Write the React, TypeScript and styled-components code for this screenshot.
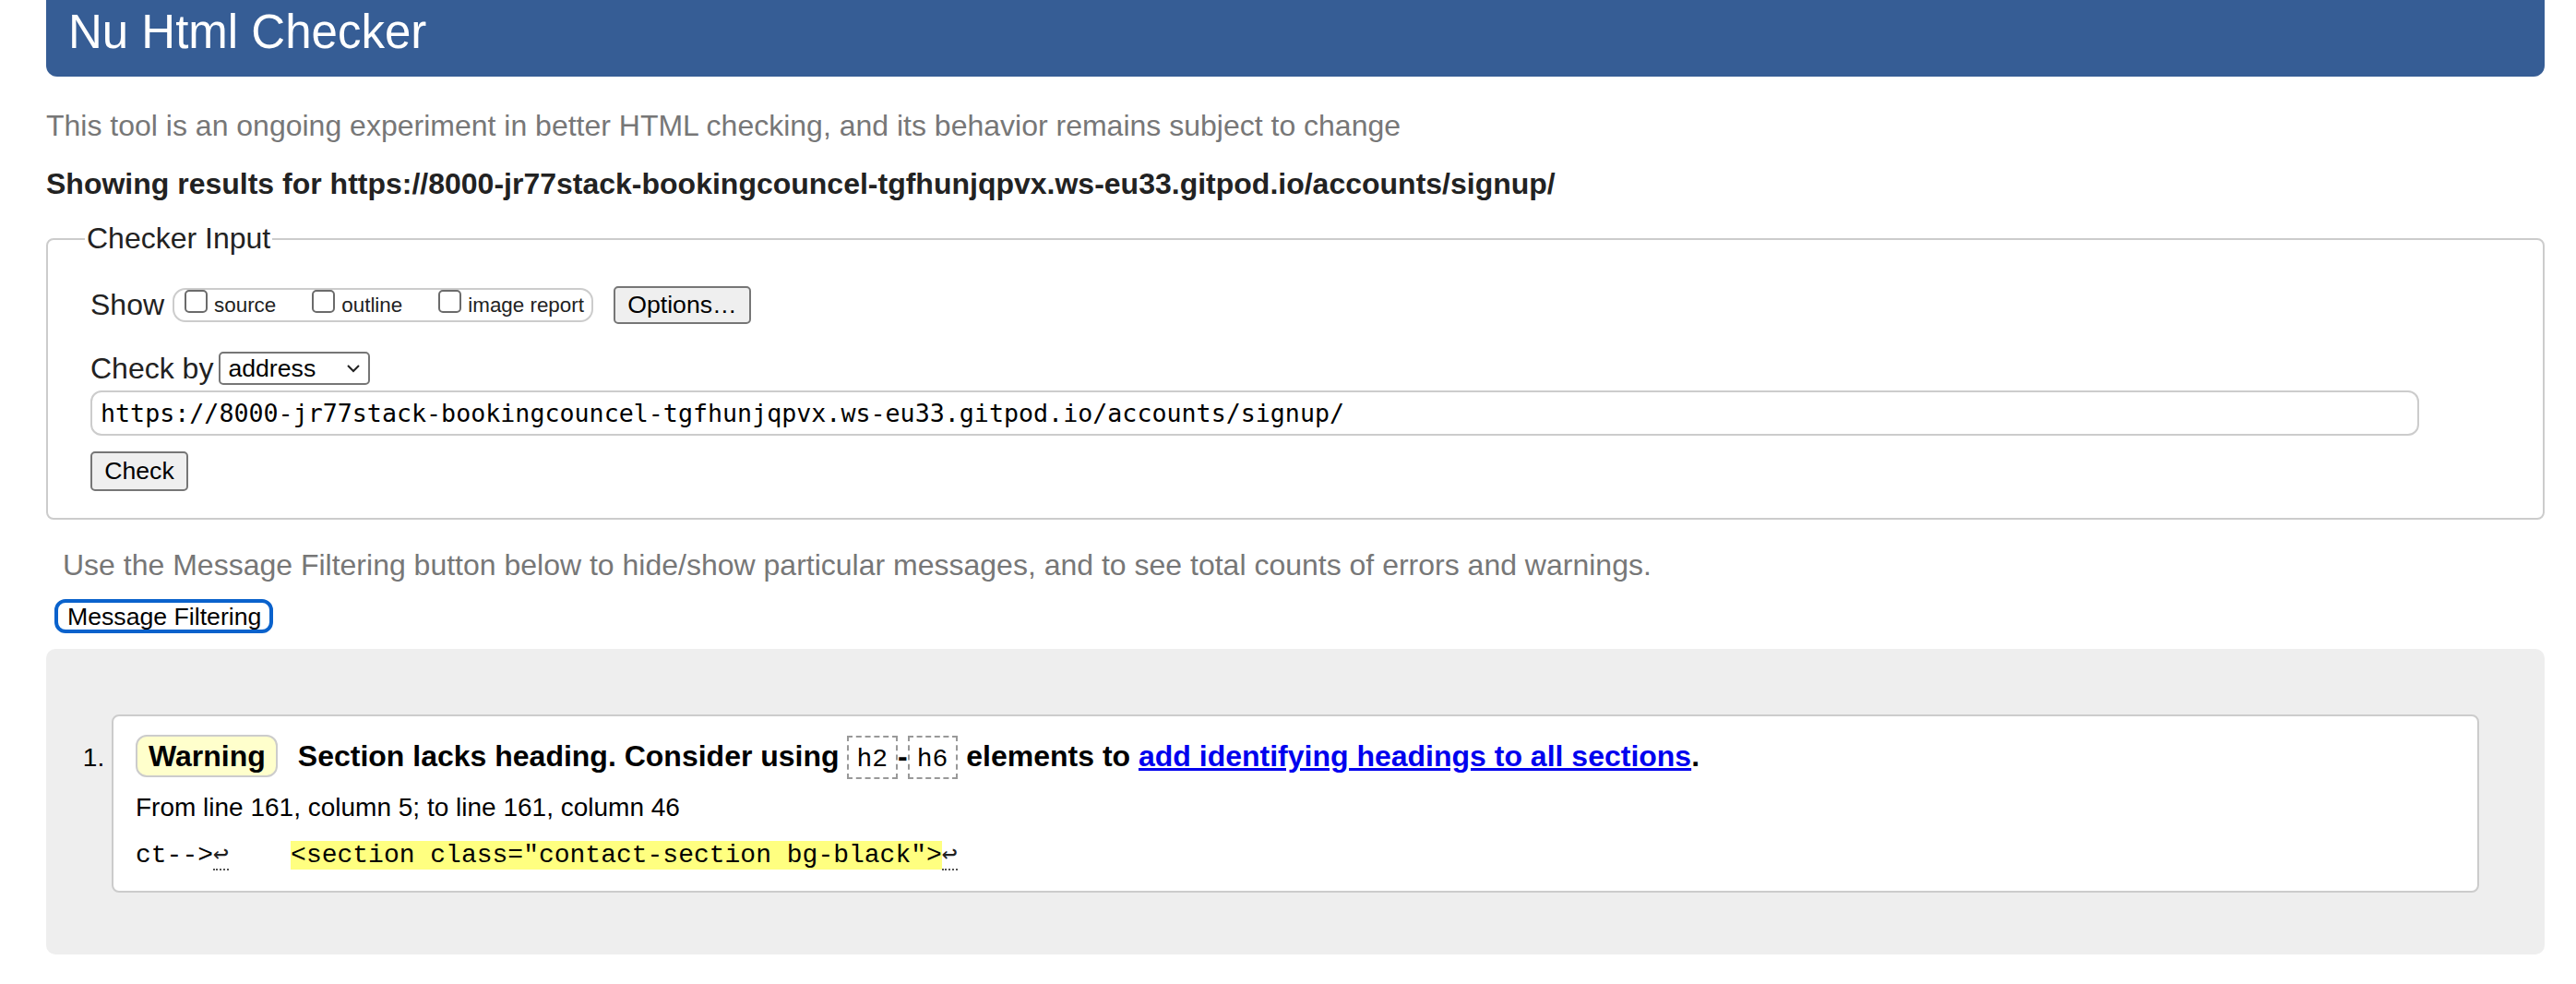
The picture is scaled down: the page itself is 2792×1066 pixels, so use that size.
import React from "react";
import styled, { createGlobalStyle } from "styled-components";

const GlobalStyle = createGlobalStyle`
  html, body { margin: 0; padding: 0; background: #fff; }
  body {
    font-family: "Liberation Sans", Arial, Helvetica, sans-serif;
    color: #000;
  }
  * { box-sizing: border-box; }
`;

const Page = styled.div`
  padding: 0 34px 34px 50px;
`;

const Header = styled.h1`
  margin: 0;
  height: 83px;
  padding: 5px 24px 0;
  background: #365d95;
  color: #fff;
  font-size: 51px;
  font-weight: normal;
  line-height: 60px;
  border-radius: 0 0 12px 12px;
`;

const Note = styled.p<{ $top: number; $indent?: number }>`
  margin: ${(p) => p.$top}px 0 0 ${(p) => p.$indent ?? 0}px;
  font-size: 32px;
  line-height: 40px;
  color: #777;
`;

const Results = styled.p`
  margin: 23px 0 0;
  font-size: 32px;
  line-height: 40px;
  font-weight: bold;
  color: #222;
`;

const Fieldset = styled.fieldset`
  margin: 21px 0 0;
  padding: 33px 46px 29px;
  border: 2px solid #ccc;
  border-radius: 8px;
  min-width: 0;
`;

const Legend = styled.legend`
  font-size: 32px;
  line-height: 37px;
  padding: 0 2px;
  margin-left: -6px;
  color: #222;
`;

const Row = styled.div<{ $h: number; $top?: number }>`
  display: flex;
  align-items: center;
  height: ${(p) => p.$h}px;
  margin-top: ${(p) => p.$top ?? 0}px;
`;

const FieldLabel = styled.span<{ $gap: number }>`
  font-size: 32px;
  line-height: 37px;
  color: #222;
  margin-right: ${(p) => p.$gap}px;
`;

const OptionGroup = styled.div`
  display: flex;
  align-items: flex-start;
  height: 37px;
  padding: 0 8px 0 11px;
  border: 2px solid #ccc;
  border-radius: 14px;
`;

const Option = styled.label<{ $last?: boolean }>`
  display: flex;
  align-items: flex-start;
  margin-right: ${(p) => (p.$last ? 0 : 39)}px;
  cursor: pointer;
`;

const Check = styled.input`
  appearance: none;
  -webkit-appearance: none;
  width: 25px;
  height: 25px;
  margin: 0 7px 0 0;
  border: 2px solid #6b6b6b;
  border-radius: 5px;
  background: #fff;
`;

const OptionText = styled.span`
  font-size: 22.4px;
  line-height: 33px;
  color: #222;
`;

const Button = styled.button<{ $w: number; $h: number; $ml?: number }>`
  width: ${(p) => p.$w}px;
  height: ${(p) => p.$h}px;
  margin-left: ${(p) => p.$ml ?? 0}px;
  padding: 0;
  font-family: "Liberation Sans", Arial, sans-serif;
  font-size: 26.67px;
  color: #000;
  background: #efefef;
  border: 2px solid #767676;
  border-radius: 5px;
`;

const SelectBox = styled.div`
  display: flex;
  align-items: center;
  justify-content: space-between;
  width: 164px;
  height: 36px;
  padding: 0 8px 0 8px;
  border: 2px solid #767676;
  border-radius: 5px;
  background: #fff;
  font-size: 26.67px;
  color: #000;
`;

const UrlInput = styled.input`
  width: 2524px;
  height: 49px;
  padding: 0 9px;
  border: 2px solid #ccc;
  border-radius: 12px;
  font-family: "DejaVu Sans Mono", monospace;
  font-size: 26.67px;
  color: #000;
  outline: none;
`;

const FocusButton = styled.button`
  display: block;
  margin: 17px 0 0 9px;
  width: 237px;
  height: 37px;
  padding: 0 0 0 10px;
  text-align: left;
  font-family: "Liberation Sans", Arial, sans-serif;
  font-size: 26.67px;
  color: #000;
  background: #fff;
  border: 4px solid #0a62cc;
  border-radius: 12px;
`;

const Panel = styled.div`
  margin-top: 17px;
  padding: 71px 71px 67px;
  background: #eee;
  border-radius: 10px;
`;

const List = styled.ol`
  margin: 0;
  padding: 0;
  list-style: decimal outside;
`;

const Item = styled.li`
  font-size: 28px;
  color: #000;
  background: #fff;
  border: 2px solid #ccc;
  border-radius: 8px;
  padding: 19px 24px 18px;
`;

const Message = styled.p`
  margin: 0;
  font-size: 32px;
  font-weight: bold;
  line-height: 48px;
`;

const Badge = styled.span`
  display: inline-block;
  margin-right: 22px;
  padding: 3px 11px 2px 12px;
  line-height: 37px;
  background: #ffffcc;
  border: 2px solid #ccc;
  border-radius: 12px;
`;

const Code = styled.code`
  font-family: "Liberation Mono", "Courier New", monospace;
  font-size: 28px;
  font-weight: normal;
  padding: 8px 9px 4px 8px;
  border: 2px dashed #999;
`;

const Link = styled.a`
  color: #0000ee;
  text-decoration: underline;
`;

const Location = styled.p`
  margin: 8px 0 0;
  font-size: 28px;
  line-height: 40px;
`;

const Extract = styled.p`
  margin: 10px 0 0;
  font-family: "Liberation Mono", "Courier New", monospace;
  font-size: 28px;
  line-height: 40px;
  white-space: pre;
`;

const LineFeed = styled.b`
  font-family: "DejaVu Sans Mono", monospace;
  font-weight: normal;
  font-size: 28px;
  color: #222;
  border-bottom: 2px dotted #555;
`;

const Highlight = styled.mark`
  background: #ffff80;
  color: #000;
`;

const Chevron = () => (
  <svg width="16" height="10" viewBox="0 0 16 10" aria-hidden="true">
    <path d="M2 2 L8 8 L14 2" fill="none" stroke="#222" strokeWidth="2" />
  </svg>
);

const URL =
  "https://8000-jr77stack-bookingcouncel-tgfhunjqpvx.ws-eu33.gitpod.io/accounts/signup/";

export default function App() {
  return (
    <>
      <GlobalStyle />
      <Page>
        <Header>Nu Html Checker</Header>
        <Note $top={33}>
          This tool is an ongoing experiment in better HTML checking, and its
          behavior remains subject to change
        </Note>
        <Results>Showing results for {URL}</Results>

        <Fieldset>
          <Legend>Checker Input</Legend>
          <Row $h={41}>
            <FieldLabel $gap={9}>Show</FieldLabel>
            <OptionGroup>
              <Option>
                <Check type="checkbox" />
                <OptionText>source</OptionText>
              </Option>
              <Option>
                <Check type="checkbox" />
                <OptionText>outline</OptionText>
              </Option>
              <Option $last>
                <Check type="checkbox" />
                <OptionText>image report</OptionText>
              </Option>
            </OptionGroup>
            <Button $w={149} $h={41} $ml={22}>
              Options…
            </Button>
          </Row>
          <Row $h={38} $top={29}>
            <FieldLabel $gap={6}>Check by</FieldLabel>
            <SelectBox>
              <span>address</span>
              <Chevron />
            </SelectBox>
          </Row>
          <Row $h={49} $top={5}>
            <UrlInput readOnly value={URL} />
          </Row>
          <Row $h={43} $top={17}>
            <Button $w={106} $h={43}>
              Check
            </Button>
          </Row>
        </Fieldset>

        <Note $top={29} $indent={18}>
          Use the Message Filtering button below to hide/show particular
          messages, and to see total counts of errors and warnings.
        </Note>
        <FocusButton>Message Filtering</FocusButton>

        <Panel>
          <List>
            <Item>
              <Message>
                <Badge>Warning</Badge>
                Section lacks heading. Consider using <Code>h2</Code>-
                <Code>h6</Code> elements to{" "}
                <Link href="#">add identifying headings to all sections</Link>.
              </Message>
              <Location>
                From line 161, column 5; to line 161, column 46
              </Location>
              <Extract>
                {"ct-->"}
                <LineFeed title="U+000A LINE FEED">↩</LineFeed>
                {"    "}
                <Highlight>{'<section class="contact-section bg-black">'}</Highlight>
                <LineFeed title="U+000A LINE FEED">↩</LineFeed>
              </Extract>
            </Item>
          </List>
        </Panel>
      </Page>
    </>
  );
}
